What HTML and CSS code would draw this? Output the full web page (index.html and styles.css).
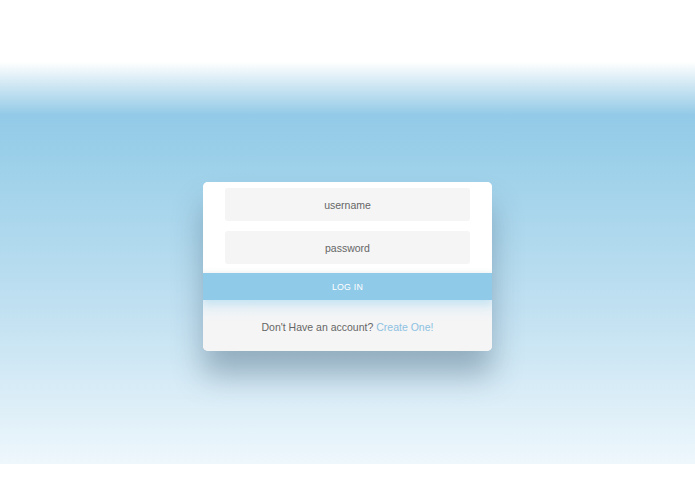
FILE: index.html
```html
<!DOCTYPE html>
<html>
<head>
<meta charset="utf-8">
<link rel="stylesheet" href="styles.css">
</head>
<body>
<div class="top"></div>
<main class="stage">
  <form class="card">
    <div class="fields">
      <div class="input">username</div>
      <div class="input">password</div>
    </div>
    <button class="login" type="button">LOG IN</button>
    <div class="foot">Don't Have an account? <a class="link" href="#">Create One!</a></div>
  </form>
</main>
<div class="bottom"></div>
</body>
</html>
```
FILE: styles.css
```css
html, body {
  margin: 0;
  padding: 0;
  background: #ffffff;
  font-family: "Liberation Sans", Arial, sans-serif;
}
.top {
  height: 62px;
  background: #ffffff;
}
.stage {
  height: 402px;
  background: linear-gradient(to bottom, #ffffff 0px, #c9e4f2 26px, #93cae7 53px, #9acfe9 90px, #c4e2f2 260px, #eef7fc 402px);
  display: flex;
  justify-content: center;
  align-items: flex-start;
  padding-top: 120px;
  box-sizing: border-box;
}
.bottom {
  height: 30px;
  background: #ffffff;
}
.card {
  width: 289px;
  height: 169px;
  border-radius: 5px;
  background: #f5f5f5;
  box-shadow: 0 24px 30px rgba(40, 70, 95, 0.35);
  overflow: hidden;
  display: flex;
  flex-direction: column;
  margin: 0;
}
.fields {
  background: #ffffff;
  padding: 6px 22px 9px;
  display: flex;
  flex-direction: column;
  gap: 10px;
  box-shadow: inset 0 -4px 5px -3px rgba(0, 0, 0, 0.05);
}
.input {
  height: 33px;
  background: #f5f5f5;
  border-radius: 3px;
  color: #666666;
  font-size: 10.5px;
  display: flex;
  align-items: center;
  justify-content: center;
}
.login {
  height: 27px;
  border: 0;
  margin: 0;
  padding: 0;
  background: #8fcae8;
  color: #ffffff;
  font-family: "Liberation Sans", Arial, sans-serif;
  font-size: 8.8px;
  letter-spacing: 0.2px;
  box-shadow: 0 5px 8px rgba(143, 202, 232, 0.35);
  position: relative;
}
.foot {
  flex: 1;
  display: flex;
  align-items: center;
  justify-content: center;
  color: #666666;
  font-size: 10.5px;
  padding-top: 3px;
  background: linear-gradient(to bottom, #e6f1f8 0px, #f5f5f5 22px);
}
.link {
  color: #8dc1e2;
  text-decoration: none;
  margin-left: 3px;
}
```
